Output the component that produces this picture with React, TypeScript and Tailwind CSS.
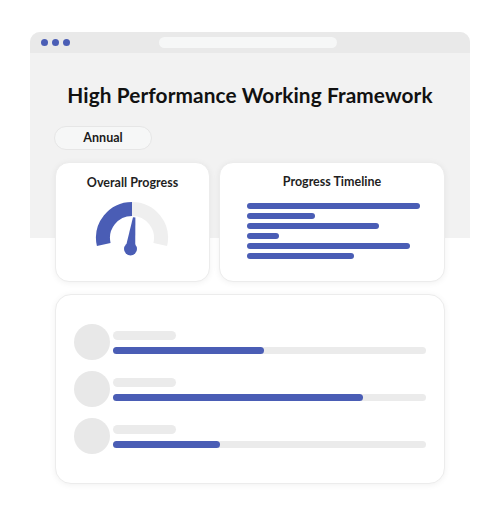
import React from 'react'

const BLUE = '#4a5db5'

const timeline = [173, 68, 132, 32, 163, 107]
const rows = [151, 250, 107]

function Gauge() {
  return (
    <svg width="80" height="56" viewBox="0 0 80 56" className="block">
      <path d="M 11.74 42.52 A 29 29 0 0 1 40 7" fill="none" stroke={BLUE} strokeWidth="14" />
      <path d="M 40 7 A 29 29 0 0 1 68.26 42.52" fill="none" stroke="#efefef" strokeWidth="14" />
      <path d="M 33.5 46 L 41 15.2 L 43.4 15.6 L 43.2 47 Z" fill={BLUE} />
      <circle cx="38.5" cy="47" r="6.5" fill={BLUE} />
    </svg>
  )
}

export default function App() {
  return (
    <div
      className="w-[500px] h-[524px] bg-white pt-[32px] px-[30px]"
      style={{ fontFamily: 'Lato, "Noto Sans", sans-serif' }}
    >
      {/* browser window */}
      <div className="h-[206px] bg-[#f2f2f2] rounded-t-[10px]">
        <div className="h-[21px] bg-[#e9e9e9] rounded-t-[10px] flex items-center pl-[11px]">
          <div className="flex gap-[4px]">
            <span className="w-[7px] h-[7px] rounded-full bg-[#4a5db5]" />
            <span className="w-[7px] h-[7px] rounded-full bg-[#4a5db5]" />
            <span className="w-[7px] h-[7px] rounded-full bg-[#4a5db5]" />
          </div>
          <div className="ml-[89px] w-[178px] h-[11px] rounded-full bg-[#f6f7f7]" />
        </div>

        <h1 className="mt-[28px] text-center text-[20.8px] leading-[28px] font-bold text-[#111] tracking-[0.1px]">
          High Performance Working Framework
        </h1>

        <div className="mt-[17px] ml-[24px] w-[98px] h-[24px] rounded-full bg-[#f6f7f7] border border-[#e6e6e6] flex items-center justify-center text-[12.5px] font-bold text-[#1a1a1a]">
          Annual
        </div>

        <div className="mt-[12px] px-[25px] flex gap-[9px]">
          <div className="w-[155px] h-[120px] bg-white rounded-[14px] border border-[#ececec] shadow-[0_1px_6px_rgba(0,0,0,0.06)] pt-[12px] flex flex-col items-center">
            <div className="text-[12.5px] leading-[16px] font-bold text-[#1f1f1f]">Overall Progress</div>
            <div className="mt-[11px] ml-[-2px]">
              <Gauge />
            </div>
          </div>

          <div className="w-[226px] h-[120px] bg-white rounded-[14px] border border-[#ececec] shadow-[0_1px_6px_rgba(0,0,0,0.06)] pt-[11px] pl-[27px]">
            <div className="text-[12.5px] leading-[16px] font-bold text-[#1f1f1f] text-center pr-[27px]">
              Progress Timeline
            </div>
            <div className="mt-[13px] flex flex-col gap-[4px]">
              {timeline.map((w, i) => (
                <div key={i} className="h-[6px] rounded-full bg-[#4a5db5]" style={{ width: w }} />
              ))}
            </div>
          </div>
        </div>
      </div>

      {/* list card */}
      <div className="mt-[56px] mx-[25px] h-[190px] bg-white rounded-[16px] border border-[#ececec] shadow-[0_1px_6px_rgba(0,0,0,0.06)] pt-[29px] px-[18px] flex flex-col gap-[11px]">
        {rows.map((w, i) => (
          <div key={i} className="flex items-start gap-[3px]">
            <div className="w-[36px] h-[36px] rounded-full bg-[#e8e8e8] shrink-0" />
            <div className="flex-1 pt-[7px]">
              <div className="w-[63px] h-[9px] rounded-full bg-[#ebebeb]" />
              <div className="mt-[7px] h-[7px] rounded-full bg-[#ebebeb]">
                <div className="h-full rounded-full bg-[#4a5db5]" style={{ width: w }} />
              </div>
            </div>
          </div>
        ))}
      </div>
    </div>
  )
}
